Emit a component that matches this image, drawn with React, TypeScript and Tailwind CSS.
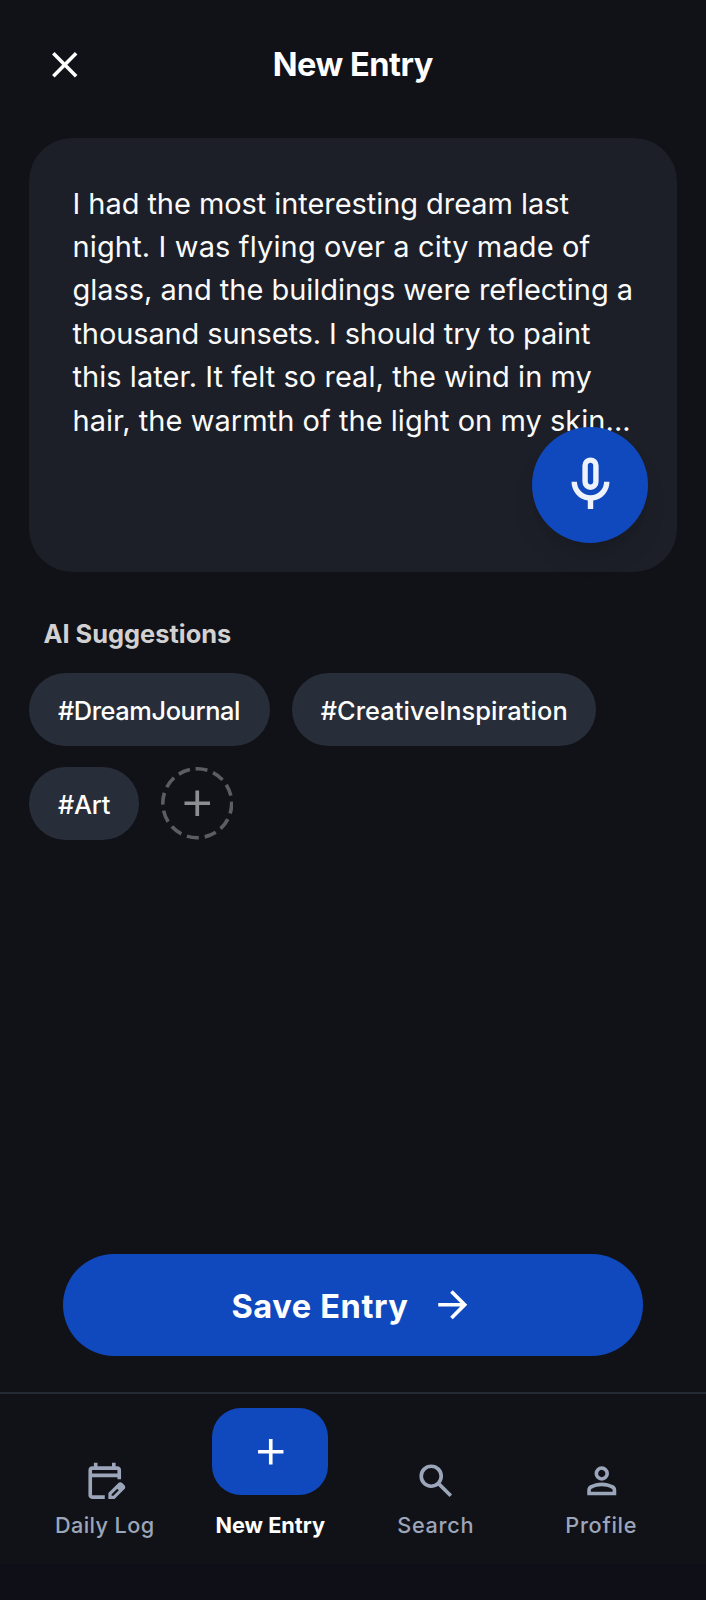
import React from "react";

function Icon({ d, className }: { d: string; className: string }) {
  return (
    <svg viewBox="0 0 24 24" fill="currentColor" fillRule="evenodd" className={className} aria-hidden="true">
      <path d={d} />
    </svg>
  );
}

const icons = {
  close: "M6.4 19L5 17.6 10.6 12 5 6.4 6.4 5 12 10.6 17.6 5 19 6.4 13.4 12 19 17.6 17.6 19 12 13.4z",
  mic: "M12 14q-1.25 0-2.125-.875T9 11V5q0-1.25.875-2.125T12 2t2.125.875T15 5v6q0 1.25-.875 2.125T12 14m-1 7v-3.075q-2.6-.35-4.3-2.325T5 11h2q0 2.075 1.463 3.538T12 16t3.538-1.463T17 11h2q0 2.625-1.7 4.6T13 17.925V21zm1-9q.425 0 .713-.288T13 11V5q0-.425-.288-.712T12 4t-.712.288T11 5v6q0 .425.288.713T12 12",
  plus: "M11 13H5v-2h6V5h2v6h6v2h-6v6h-2z",
  arrow: "M16.175 13H4v-2h12.175l-5.6-5.6L12 4l8 8-8 8-1.425-1.4z",
  search: "M19.6 21l-6.3-6.3q-.75.6-1.725.95T9.5 16q-2.725 0-4.612-1.888T3 9.5t1.888-4.612T9.5 3t4.613 1.888T16 9.5q0 1.1-.35 2.075T14.7 13.3l6.3 6.3zM9.5 14q1.875 0 3.188-1.312T14 9.5t-1.312-3.187T9.5 5 6.313 6.313 5 9.5t1.313 3.188T9.5 14",
  person: "M12 12q-1.65 0-2.825-1.175T8 8t1.175-2.825T12 4t2.825 1.175T16 8t-1.175 2.825T12 12m-8 8v-2.8q0-.85.438-1.562T5.6 14.55q1.55-.775 3.15-1.162T12 13t3.25.388 3.15 1.162q.725.375 1.163 1.088T20 17.2V20zm2-2h12v-.8q0-.275-.137-.5t-.363-.35q-1.35-.675-2.725-1.012T12 15t-2.775.338T6.5 16.35q-.225.125-.363.35T6 17.2zm6-8q.825 0 1.413-.587T14 8t-.587-1.412T12 6t-1.412.588T10 8t.588 1.413T12 10",
  calendar:
    "M5 22q-.825 0-1.412-.587T3 20V6q0-.825.588-1.412T5 4h1V2h2v2h8V2h2v2h1q.825 0 1.413.588T21 6v5.2h-2V10H5v10h7v2zM5 8h14V6H5zM14 22v-3.275l5.525-5.5q.225-.225.5-.325t.55-.1q.3 0 .575.113t.5.337l1.225 1.225q.2.225.313.5t.112.55-.1.563-.325.512l-5.5 5.4zM15.8 20.3h.95l3-3.05-.85-.85-3.1 3z",
};

const lines = [
  { text: "I had the most interesting dream last", spacing: "tracking-[-0.06px]" },
  { text: "night. I was flying over a city made of", spacing: "tracking-[0.14px]" },
  { text: "glass, and the buildings were reflecting a", spacing: "tracking-[-0.02px]" },
  { text: "thousand sunsets. I should try to paint", spacing: "tracking-[-0.12px]" },
  { text: "this later. It felt so real, the wind in my", spacing: "tracking-[0.05px]" },
  { text: "hair, the warmth of the light on my skin...", spacing: "tracking-[0.04px]" },
];

const tags = [
  { text: "#DreamJournal", style: "w-[241px] tracking-[-0.42px]" },
  { text: "#CreativeInspiration", style: "w-[304px] tracking-[0.08px]" },
  { text: "#Art", style: "w-[110px] tracking-[-0.2px]" },
];

function NavItem({ icon, label, spacing }: { icon: string; label: string; spacing: string }) {
  return (
    <a href="#" className="flex w-[165.5px] flex-col items-center text-[#9ca6ba]">
      <Icon d={icon} className="size-[43.5px]" />
      <span className={`mt-px text-[21.7px] leading-[44px] font-[450] whitespace-nowrap ${spacing}`}>{label}</span>
    </a>
  );
}

export default function App() {
  return (
    <div className="flex h-[1600px] w-[706px] flex-col bg-[#111217] font-['Inter',sans-serif] text-white">
      <header className="flex h-[137.5px] items-center px-[43px] pb-[7.5px]">
        <button className="size-[43.5px]">
          <Icon d={icons.close} className="size-[43.5px]" />
        </button>
        <h1 className="flex-1 pr-[44px] pb-[2px] text-center text-[32.6px] leading-[41px] font-bold tracking-[-0.49px]">New Entry</h1>
      </header>

      <main className="flex flex-1 flex-col px-[29px]">
        <section className="relative h-[434px] rounded-[43.5px] bg-[#1c1f27] px-[43.5px] pt-[44px]">
          <p className="text-[29px] leading-[43.45px] whitespace-nowrap text-[#fafafa]">
            {lines.map((line) => (
              <span key={line.text} className={`block ${line.spacing}`}>
                {line.text}
              </span>
            ))}
          </p>
          <button className="absolute right-[29px] bottom-[29px] flex size-[116px] items-center justify-center rounded-full bg-[#1049be] text-white/93 shadow-[0_18px_27px_-5px_rgb(0_0_0/0.1),0_7px_11px_-7px_rgb(0_0_0/0.1)]">
            <Icon d={icons.mic} className="size-[65px]" />
          </button>
        </section>

        <h2 className="mt-[44px] pl-[14.5px] text-[25.4px] leading-[36px] font-bold text-[#d1d1d1]">AI Suggestions</h2>
        <div className="mt-[21.5px] flex flex-wrap gap-[21.7px]">
          {tags.map((tag) => (
            <span
              key={tag.text}
              className={`flex h-[72.5px] items-center rounded-full bg-[#282e39] pt-[4px] pl-[29px] text-[25.4px] font-[460] ${tag.style}`}
            >
              {tag.text}
            </span>
          ))}
          <button className="flex size-[72.5px] items-center justify-center text-[#8d8e91]">
            <svg viewBox="0 0 72.5 72.5" fill="none" className="size-[72.5px]" aria-hidden="true">
              <circle
                cx="36.25"
                cy="36.25"
                r="34.45"
                stroke="#5c5d61"
                strokeWidth="3.6"
                strokeDasharray="12 6.038"
                transform="rotate(-92.8 36.25 36.25)"
              />
              <path d="M36.25 23.5v25.5M23.5 36.25h25.5" stroke="currentColor" strokeWidth="3.7" />
            </svg>
          </button>
        </div>

        <button className="mx-[34px] mt-auto mb-[36.5px] flex h-[101.5px] items-center justify-center gap-[22.5px] rounded-full bg-[#1049be]">
          <span className="pt-[2px] text-[32.6px] leading-[40px] font-bold tracking-[0.6px]">Save Entry</span>
          <Icon d={icons.arrow} className="size-[43.5px]" />
        </button>
      </main>

      <footer className="h-[208px] border-t-2 border-[#252b35]">
        <nav className="flex h-[170px] items-end px-[22px] pb-[17px]">
          <NavItem icon={icons.calendar} label="Daily Log" spacing="tracking-[0.4px]" />
          <a href="#" className="flex w-[165.5px] flex-col items-center">
            <span className="flex h-[87px] w-[116px] items-center justify-center rounded-[29px] bg-[#1049be]">
              <Icon d={icons.plus} className="size-[43.5px]" />
            </span>
            <span className="mt-[8px] text-[21.7px] leading-[44px] font-bold whitespace-nowrap">New Entry</span>
          </a>
          <NavItem icon={icons.search} label="Search" spacing="tracking-[0.7px]" />
          <NavItem icon={icons.person} label="Profile" spacing="tracking-[0.7px]" />
        </nav>
        <div className="h-[36px] bg-[#0f0f18]" />
      </footer>
    </div>
  );
}
